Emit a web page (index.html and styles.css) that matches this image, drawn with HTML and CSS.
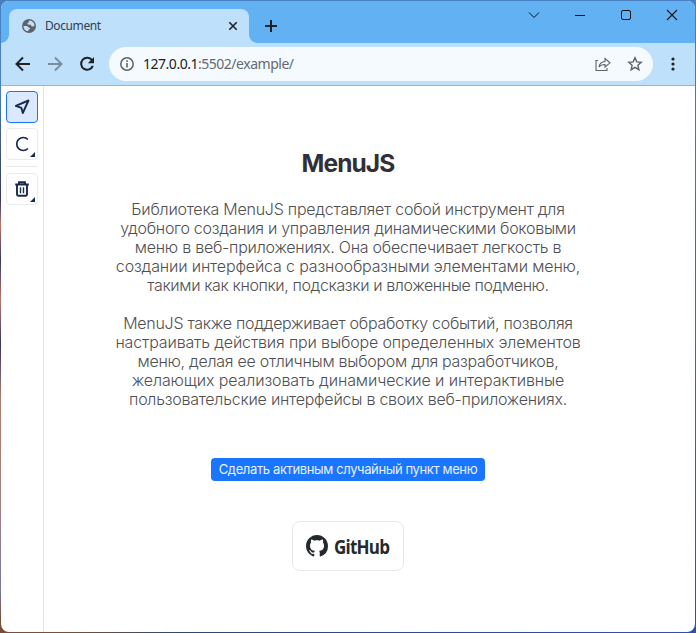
FILE: index.html
```
<!DOCTYPE html>
<html lang="ru">
<head>
<meta charset="utf-8">
<title>Document</title>
<link rel="stylesheet" href="styles.css">
</head>
<body>
<div class="window">
  <header class="tabstrip">
    <div class="tab">
      <svg class="globe" width="14" height="14" viewBox="0 0 14 14"><circle cx="7" cy="7" r="7" fill="#5f6368"/><path d="M7.700 1.500C6 2 7.500 3.300 6.200 3.800S5 5.200 6.300 5.500l2 .3c1.200.3.8 1.800 2.200 1.600l2-.5A5.600 5.600 0 0 0 7.700 1.500zM1.500 6.900h3c1.500 0 1.600 1.600 2.800 1.800 1.300.2 1 1.300 0 1.600s-.6 1.500-1.500 2A5.600 5.600 0 0 1 1.500 6.900z" fill="#bfe0fb"/></svg>
      <span class="tab-title">Document</span>
      <svg width="10" height="10" viewBox="0 0 10 10"><path d="M1.300 1.300l7.400 7.400M8.700 1.300L1.300 8.700" stroke="#202124" stroke-width="1.600"/></svg>
    </div>
    <svg class="plus" width="12" height="12" viewBox="0 0 12 12"><path d="M6 0v12M0 6h12" stroke="#202124" stroke-width="2"/></svg>
    <div class="controls">
      <svg width="12" height="12" viewBox="0 0 12 12"><path d="M1 3.500l5 5 5-5" fill="none" stroke="#111" /></svg>
      <svg width="12" height="12" viewBox="0 0 12 12"><path d="M1 6.500h10" stroke="#111"/></svg>
      <svg width="12" height="12" viewBox="0 0 12 12"><rect x="1.500" y="1.500" width="9" height="9" rx="1.500" fill="none" stroke="#111"/></svg>
      <svg width="12" height="12" viewBox="0 0 12 12"><path d="M1 1l10 10M11 1L1 11" stroke="#111" stroke-width="1.100"/></svg>
    </div>
  </header>
  <nav class="toolbar">
    <svg class="nav" width="16" height="16" viewBox="0 0 16 16"><path d="M15 8H2M8 1.500L1.500 8 8 14.500" fill="none" stroke="#202124" stroke-width="2"/></svg>
    <svg class="nav" width="16" height="16" viewBox="0 0 16 16"><path d="M1 8h13M8 1.500L14.500 8 8 14.500" fill="none" stroke="#7c8e9d" stroke-width="2"/></svg>
    <svg class="nav" width="16" height="16" viewBox="0 0 16 16"><path d="M13 4.200A6 6 0 1 0 13.800 9.800" fill="none" stroke="#202124" stroke-width="2"/><path d="M15 1v6.200H8.800z" fill="#202124"/></svg>
    <div class="address">
      <svg width="14" height="14" viewBox="0 0 14 14"><circle cx="7" cy="7" r="6.200" fill="none" stroke="#5f6368" stroke-width="1.500"/><path d="M7 6v4.500M7 3.300v1.600" stroke="#5f6368" stroke-width="1.600"/></svg>
      <span class="url"><b>127.0.0.1</b>:5502/example/</span>
      <svg class="share" width="16" height="14" viewBox="0 0 16 14"><path d="M3 3.500H1v10h11v-2.500M4 10c.5-3.500 2.500-5.300 6-5.500V1.500l5 4.300-5 4.200V7.500C7.500 7.500 5.500 8 4 10z" fill="none" stroke="#5f6368" stroke-width="1.100"/></svg>
      <svg class="star" width="16" height="16" viewBox="0 0 16 16"><path d="M8 1.800l1.800 4.100 4.400.4-3.300 3 1 4.400L8 11.400l-3.900 2.300 1-4.400-3.300-3 4.400-.4z" fill="none" stroke="#5f6368" stroke-width="1.400"/></svg>
    </div>
    <svg class="dots" width="4" height="14" viewBox="0 0 4 14"><g fill="#202124"><circle cx="2" cy="2" r="1.600"/><circle cx="2" cy="7" r="1.600"/><circle cx="2" cy="12" r="1.600"/></g></svg>
  </nav>
  <div class="page">
    <aside class="side">
      <div class="item active"><svg width="16" height="16" viewBox="0 0 16 16"><path d="M14.500 1.500L1.800 6.800l5.600 2.100 1.400 5.100z" fill="none" stroke="#172b4d" stroke-width="1.900" stroke-linejoin="round"/></svg></div>
      <div class="item more"><svg width="16" height="16" viewBox="0 0 16 16"><path d="M13.900 3.500A6.500 6.500 0 1 0 13.900 12.500" fill="none" stroke="#172b4d" stroke-width="1.700"/></svg></div>
      <div class="line"></div>
      <div class="item more"><svg width="16" height="16" viewBox="0 0 16 16"><path d="M1.200 3.500h13.600M5 3V1.300h6V3M3 4v9.500c0 .8.400 1.200 1.200 1.200h7.600c.8 0 1.200-.4 1.200-1.200V4" fill="none" stroke="#172b4d" stroke-width="1.900"/><path d="M6.500 6.200v6M9.500 6.200v6" stroke="#172b4d" stroke-width="1.400"/></svg></div>
    </aside>
    <main>
      <h1>MenuJS</h1>
      <p><span class="l1">Библиотека MenuJS представляет собой инструмент для</span><span class="l2">удобного создания и управления динамическими боковыми</span><span class="l3">меню в веб-приложениях. Она обеспечивает легкость в</span><span class="l4">создании интерфейса с разнообразными элементами меню,</span><span class="l5">такими как кнопки, подсказки и вложенные подменю.</span></p>
      <p><span class="l6">MenuJS также поддерживает обработку событий, позволяя</span><span class="l7">настраивать действия при выборе определенных элементов</span><span class="l8">меню, делая ее отличным выбором для разработчиков,</span><span class="l9">желающих реализовать динамические и интерактивные</span><span class="l10">пользовательские интерфейсы в своих веб-приложениях.</span></p>
      <button class="primary">Сделать активным случайный пункт меню</button>
      <a class="github"><svg width="22" height="22" viewBox="0 0 16 16"><path fill="#24292f" fill-rule="evenodd" d="M8 0C3.580 0 0 3.580 0 8c0 3.540 2.290 6.530 5.470 7.590.4.070.55-.17.55-.38 0-.19-.01-.82-.01-1.490-2.010.37-2.530-.49-2.690-.94-.09-.23-.48-.94-.82-1.130-.28-.15-.68-.52-.01-.53.63-.01 1.080.58 1.230.82.72 1.210 1.870.87 2.330.66.07-.52.28-.87.51-1.070-1.780-.2-3.640-.89-3.640-3.950 0-.87.31-1.590.82-2.150-.08-.2-.36-1.020.08-2.120 0 0 .67-.21 2.200.82.640-.18 1.320-.27 2-.27s1.360.09 2 .27c1.530-1.040 2.200-.82 2.200-.82.44 1.100.16 1.920.08 2.120.51.56.82 1.270.82 2.150 0 3.070-1.870 3.750-3.650 3.950.29.25.54.73.54 1.480 0 1.070-.01 1.930-.01 2.200 0 .21.15.46.55.38A8.010 8.010 0 0 0 16 8c0-4.420-3.580-8-8-8z"/></svg><span>GitHub</span></a>
    </main>
  </div>
</div>
</body>
</html>
```
FILE: styles.css
```
* { box-sizing: border-box; }
body {
  margin: 0;
  height: 633px;
  padding: 1px;
  overflow: hidden;
  background: linear-gradient(90deg, #7b4d36 0 70px, #2c4870 180px, #2c50b0 680px) bottom / 100% 3px no-repeat,
    linear-gradient(#477fc0 0 90px, #3f6585 130px, #37365f 200px, #b97869 225px, #37365f 260px, #b97869 300px, #37365f 345px, #ad7f6d 400px, #a58082 510px, #7779a0 590px, #7b4d36 620px) left / 50% 100% no-repeat,
    linear-gradient(#477fc0, #2c50b0);
}
svg { display: block; flex: none; }
.window { width: 694px; height: 631px; border-radius: 8px; overflow: hidden; background: #fff; }
.tabstrip { display: flex; height: 42px; background: #61b1f3; padding-left: 8px; }
.tab {
  position: relative;
  display: flex;
  align-items: center;
  width: 240px;
  height: 34px;
  margin-top: 8px;
  padding: 0 11px 0 13px;
  border-radius: 8px 8px 0 0;
  background: #bfe0fb;
}
.tab::before, .tab::after { content: ""; position: absolute; bottom: 0; width: 8px; height: 8px; }
.tab::before { left: -8px; background: radial-gradient(circle at 0 0, transparent 7.500px, #bfe0fb 8px); }
.tab::after { right: -8px; background: radial-gradient(circle at 100% 0, transparent 7.500px, #bfe0fb 8px); }
.tab-title { flex: 1; margin-left: 9px; font: 12px/16px "Noto Sans", sans-serif; letter-spacing: -.4px; color: #34404b; }
.plus { margin: 19px 0 0 16px; }
.controls { display: flex; gap: 34px; margin: 8px 17px 0 auto; }
.toolbar { display: flex; align-items: center; height: 43px; padding-left: 14px; background: #bfe0fb; border-bottom: 1px solid #98b4ce; }
.nav { margin-right: 16px; }
.address { display: flex; align-items: center; width: 544px; height: 34px; margin-left: -2px; padding: 0 10px 0 11px; border-radius: 17px; background: #f5faff; }
.url { flex: 1; margin-left: 9px; font: 14px/20px "Noto Sans", sans-serif; letter-spacing: -.48px; color: #666a70; }
.url b { font-weight: 400; color: #202124; }
.share { margin-right: 16px; }
.dots { margin-left: 18px; }
.page { display: flex; height: 546px; }
.side { width: 43px; border-right: 1px solid #e5e5e7; padding: 5px; }
.item { position: relative; display: grid; place-items: center; width: 32px; height: 32px; border: 1px solid #ebebed; border-radius: 4px; margin-bottom: 5px; }
.active { background: #dbe8ff; border-color: #1a75ff; }
.more svg { margin-left: -1px; }
.more::after { content: ""; position: absolute; right: 2px; bottom: 2px; border-left: 5px solid transparent; border-bottom: 5px solid #172b4d; }
.line { height: 1px; margin: 6px 0; background: #ebebed; }
main { flex: 1; display: flex; flex-direction: column; align-items: center; padding: 60px 43px 0 0; font-family: Inter, "Open Sans", sans-serif; }
h1 { margin: 0 0 19px; font-size: 24.500px; line-height: 35px; font-weight: 700; letter-spacing: -.9px; color: #2f3038; }
p { margin: 0 0 19px; font-size: 16px; line-height: 19px; font-weight: 300; color: #505053; text-align: center; }
p span { display: block; white-space: nowrap; }
.l1, .l3, .l10 { letter-spacing: -.24px; }
.l2, .l6, .l8 { letter-spacing: -.28px; }
.l4, .l7 { letter-spacing: -.15px; }
.l5 { letter-spacing: -.39px; }
.l9 { letter-spacing: -.12px; }
.primary { height: 23px; width: 274px; margin: 30px 0 40px; padding: 0; border: 0; border-radius: 4px; background: #1a75ff; color: #e9f1ff; font: 400 13px/23px Inter, sans-serif; letter-spacing: -.37px; white-space: nowrap; }
.github { display: flex; align-items: center; gap: 6px; width: 112px; height: 50px; padding-left: 13px; border: 1px solid #e8e8e9; border-radius: 8px; }
.github span { margin-top: 1px; font: 700 20px/24px "Open Sans", sans-serif; letter-spacing: -.9px; color: #24292f; transform: scaleX(.85); transform-origin: left; }
```
